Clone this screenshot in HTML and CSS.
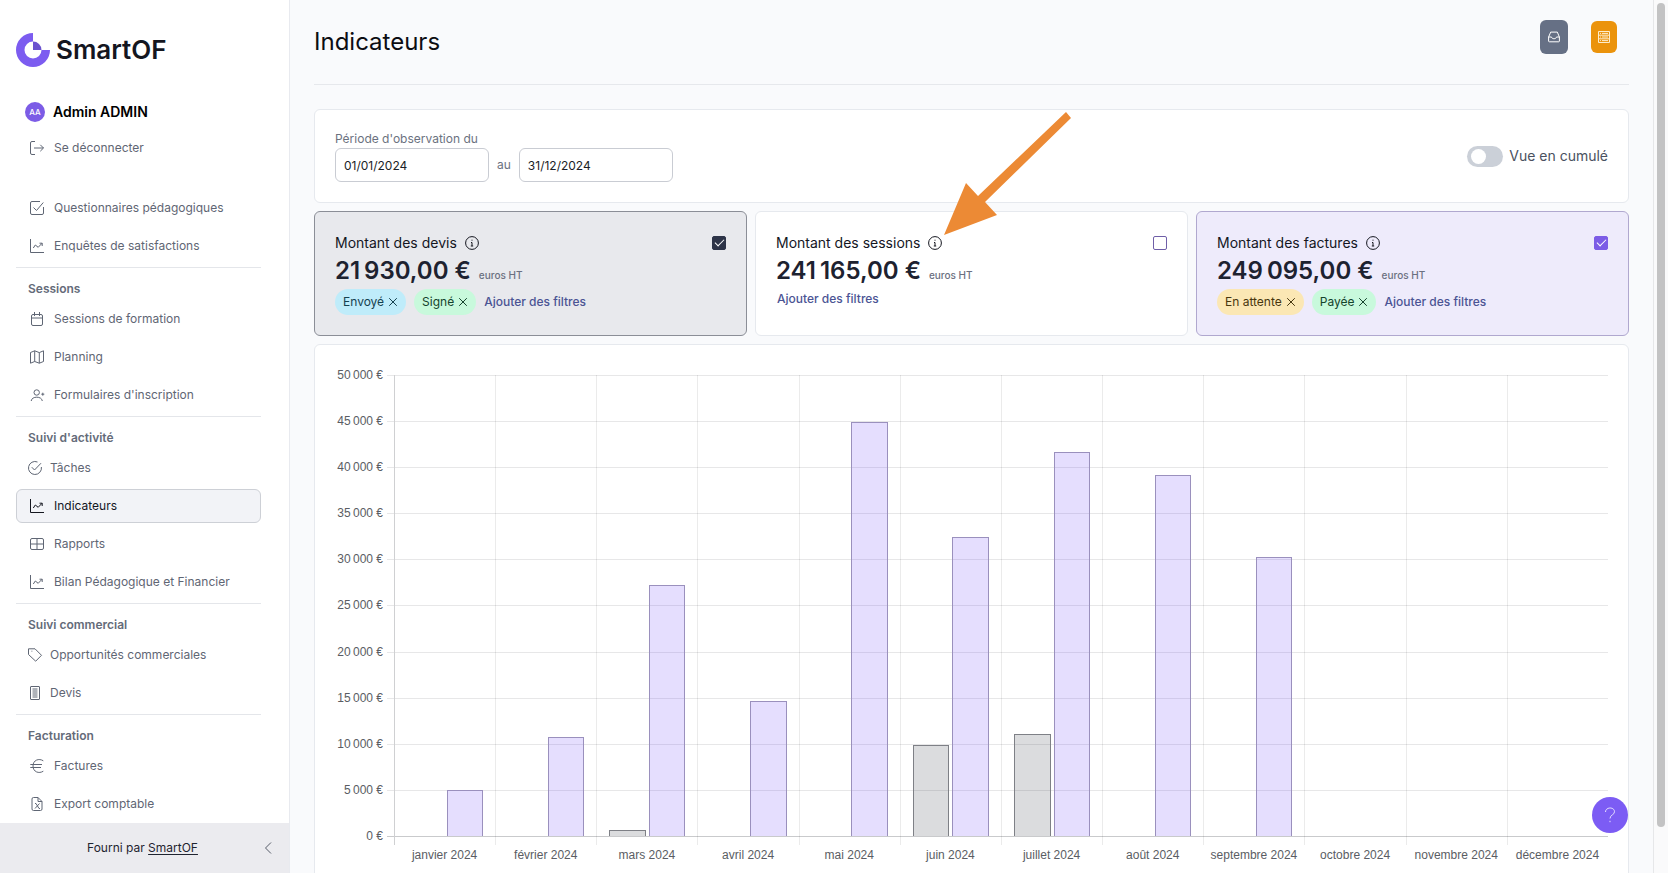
FILE: index.html
```html
<!DOCTYPE html>
<html lang="fr">
<head>
<meta charset="utf-8">
<meta name="viewport" content="width=device-width, initial-scale=1">
<title>Indicateurs – SmartOF</title>
<link rel="stylesheet" href="styles.css">
</head>
<body>
<svg class="sprite" aria-hidden="true">
  <symbol id="i-chart" viewBox="0 0 14 14"><path d="M.5 0v13.500H14M3.300 9l2-3 2.900 2.300L12 4.300M9.500 4.200H12.200V7"/></symbol>
  <symbol id="i-info" viewBox="0 0 14 14"><circle cx="7" cy="7" r="6.400"/><path d="M6 6.500h1V10M5.800 10h2.400M7 3.700v1"/></symbol>
  <symbol id="i-x" viewBox="0 0 10 10"><path d="M1.200 1.200l7.600 7.600M8.800 1.200L1.200 8.800"/></symbol>
</svg>
<div class="app">
  <aside class="sidebar">
    <a class="logo" href="#">
      <svg class="logo-mark" viewBox="0 0 34 34" aria-hidden="true"><path fill="#7c5cf0" d="M17 0A17 17 0 1 0 34 17H25.500A8.500 8.500 0 1 1 17 8.500Z"/><path fill="#6a52cf" d="M17 8.500A8.500 8.500 0 0 1 25.500 17H17Z"/></svg>
      <span>SmartOF</span>
    </a>
    <div class="user"><span class="avatar">AA</span><span>Admin ADMIN</span></div>
    <nav class="nav">
      <a class="item logout" href="#"><svg class="ico" viewBox="0 0 14 14"><path d="M5 .5H2A1.500 1.500 0 0 0 .5 2v10A1.500 1.500 0 0 0 2 13.500H5M4 7h9.500M10.300 3.800L13.500 7l-3.200 3.200"/></svg>Se déconnecter</a>
      <a class="item" href="#"><svg class="ico" viewBox="0 0 14 14"><path d="M10 .5H2A1.500 1.500 0 0 0 .5 2v10A1.500 1.500 0 0 0 2 13.500h10a1.500 1.500 0 0 0 1.500-1.500V6M3.500 6.500L6.500 9.500 13.300 1.500"/></svg>Questionnaires pédagogiques</a>
      <a class="item" href="#"><svg class="ico"><use href="#i-chart"/></svg>Enquêtes de satisfactions</a>

      <h2 class="group">Sessions</h2>
      <a class="item" href="#"><svg class="ico" viewBox="0 0 14 14"><path d="M3 2.500h8A1.500 1.500 0 0 1 12.500 4v8a1.500 1.500 0 0 1-1.500 1.500H3A1.500 1.500 0 0 1 1.500 12V4A1.500 1.500 0 0 1 3 2.500ZM1.500 6h11M4.500 0v4M9.500 0v4"/></svg>Sessions de formation</a>
      <a class="item" href="#"><svg class="ico" viewBox="0 0 14 14"><path d="M.5 2.500L4.700.8 9.300 2.600 13.500.8V11.500L9.300 13.200 4.700 11.500.5 13.200ZM4.700.8V11.500M9.300 2.600V13.200"/></svg>Planning</a>
      <a class="item" href="#"><svg class="ico" viewBox="0 0 14 14"><circle cx="6.700" cy="4.500" r="2.700"/><path d="M1.200 13C1.600 7.900 11.900 7.900 12.300 13M12.800 4.700v3M11.300 6.200h3"/></svg>Formulaires d'inscription</a>

      <h2 class="group">Suivi d'activité</h2>
      <a class="item tight" href="#"><svg class="ico" viewBox="0 0 14 14"><path d="M13.400 6A6.500 6.500 0 1 1 9.500 1M3.800 6.200L6.500 9 13 2.200"/></svg>Tâches</a>
      <a class="item active" href="#" aria-current="page"><svg class="ico"><use href="#i-chart"/></svg>Indicateurs</a>
      <a class="item" href="#"><svg class="ico" viewBox="0 0 14 14"><rect x=".5" y="1.500" width="13" height="11" rx="1.500"/><path d="M7 1.500v11M.5 7h13"/></svg>Rapports</a>
      <a class="item" href="#"><svg class="ico"><use href="#i-chart"/></svg>Bilan Pédagogique et Financier</a>

      <h2 class="group">Suivi commercial</h2>
      <a class="item tight" href="#"><svg class="ico" viewBox="0 0 14 14"><path d="M.5.8H7L13.500 7.300 7.700 13.200.5 6.500ZM3.500 3.200h.8"/></svg>Opportunités commerciales</a>
      <a class="item tight" href="#"><svg class="ico" viewBox="0 0 14 14"><rect x="2.500" y=".5" width="9" height="13" rx=".5"/><path d="M4.500 3h5M4.500 5h5M4.500 7h5M4.500 9h5M4.500 11h5"/></svg>Devis</a>

      <h2 class="group">Facturation</h2>
      <a class="item" href="#"><svg class="ico" viewBox="0 0 14 14"><path d="M13.300 1.800C9-1 3 1 3 7S9 15 13.300 12.200M.3 5.500H12M.3 8.500H11"/></svg>Factures</a>
      <a class="item" href="#"><svg class="ico" viewBox="0 0 14 14"><path d="M8 .5H3.500A1.500 1.500 0 0 0 2 2V12a1.500 1.500 0 0 0 1.500 1.500h7A1.500 1.500 0 0 0 12 12V4.500ZM8 .5v4h4M5 6.500h1L9 11.500H10M9.500 6.500L5 11.500"/></svg>Export comptable</a>
    </nav>
    <footer class="side-foot">
      <p>Fourni par <a href="#">SmartOF</a></p>
      <button class="collapse" type="button" aria-label="Replier le menu"><svg viewBox="0 0 8 14"><path d="M7 1.500L1.500 7 7 12.500"/></svg></button>
    </footer>
  </aside>

  <main class="main">
    <header class="head">
      <h1>Indicateurs</h1>
      <div class="head-actions">
        <button class="btn slate" type="button" aria-label="Boîte de réception"><svg viewBox="0 0 12 12"><path d="M.6 6L2.700 1.100H9.300L11.400 6V10a.8.8 0 0 1-.8.8H1.400A.8.8 0 0 1 .6 10ZM.6 6H3.500C3.800 8.300 8.200 8.300 8.500 6h2.900"/></svg></button>
        <button class="btn orange" type="button" aria-label="Liste"><svg viewBox="0 0 12 12"><path d="M.5.500h11v11H.5ZM.5 4.200h11M.5 7.800h11M2 2.400h1M2 6h1M2 9.600h1M4 2.400h6M4 6h6M4 9.600h6"/></svg></button>
      </div>
    </header>

    <section class="card period">
      <div>
        <label class="period-label" for="from">Période d'observation du</label>
        <div class="period-fields">
          <input class="date" id="from" type="text" value="01/01/2024">
          <label for="to">au</label>
          <input class="date" id="to" type="text" value="31/12/2024">
        </div>
      </div>
      <label class="switch"><input type="checkbox" role="switch">Vue en cumulé</label>
    </section>

    <section class="stats">
      <article class="card stat stat-devis">
        <div class="stat-top"><label for="c1">Montant des devis</label><svg class="info"><use href="#i-info"/></svg><input class="check" id="c1" type="checkbox" checked></div>
        <p class="value">21&#8239;930,00 €<small>euros HT</small></p>
        <div class="chips"><button class="chip sky" type="button">Envoyé<svg><use href="#i-x"/></svg></button><button class="chip green" type="button">Signé<svg><use href="#i-x"/></svg></button><a class="add" href="#">Ajouter des filtres</a></div>
      </article>
      <article class="card stat">
        <div class="stat-top"><label for="c2">Montant des sessions</label><svg class="info"><use href="#i-info"/></svg><input class="check" id="c2" type="checkbox"></div>
        <p class="value">241&#8239;165,00 €<small>euros HT</small></p>
        <a class="add alone" href="#">Ajouter des filtres</a>
        <svg class="arrow" viewBox="0 0 128 124" aria-hidden="true"><path d="M0 123L22 71 34 84 122 0 127 6 41 90 53 103Z"/></svg>
      </article>
      <article class="card stat stat-factures">
        <div class="stat-top"><label for="c3">Montant des factures</label><svg class="info"><use href="#i-info"/></svg><input class="check" id="c3" type="checkbox" checked></div>
        <p class="value">249&#8239;095,00 €<small>euros HT</small></p>
        <div class="chips"><button class="chip amber" type="button">En attente<svg><use href="#i-x"/></svg></button><button class="chip green" type="button">Payée<svg><use href="#i-x"/></svg></button><a class="add" href="#">Ajouter des filtres</a></div>
      </article>
    </section>

    <section class="card chart">
      <div class="rows">
        <div class="row"><span>50&#8239;000 €</span></div>
        <div class="row"><span>45&#8239;000 €</span></div>
        <div class="row"><span>40&#8239;000 €</span></div>
        <div class="row"><span>35&#8239;000 €</span></div>
        <div class="row"><span>30&#8239;000 €</span></div>
        <div class="row"><span>25&#8239;000 €</span></div>
        <div class="row"><span>20&#8239;000 €</span></div>
        <div class="row"><span>15&#8239;000 €</span></div>
        <div class="row"><span>10&#8239;000 €</span></div>
        <div class="row"><span>5&#8239;000 €</span></div>
        <div class="row zero"><span>0 €</span></div>
      </div>
      <div class="months">
        <div class="month"><i class="bar f" style="height:10%"></i></div>
        <div class="month"><i class="bar f" style="height:21.5%"></i></div>
        <div class="month"><i class="bar d" style="height:1.2%"></i><i class="bar f" style="height:54.5%"></i></div>
        <div class="month"><i class="bar f" style="height:29.2%"></i></div>
        <div class="month"><i class="bar f" style="height:89.8%"></i></div>
        <div class="month"><i class="bar d" style="height:19.8%"></i><i class="bar f" style="height:64.9%"></i></div>
        <div class="month"><i class="bar d" style="height:22.2%"></i><i class="bar f" style="height:83.3%"></i></div>
        <div class="month"><i class="bar f" style="height:78.3%"></i></div>
        <div class="month"><i class="bar f" style="height:60.5%"></i></div>
        <div class="month"></div>
        <div class="month"></div>
        <div class="month"></div>
      </div>
      <div class="names">
        <span>janvier 2024</span><span>février 2024</span><span>mars 2024</span><span>avril 2024</span><span>mai 2024</span><span>juin 2024</span><span>juillet 2024</span><span>août 2024</span><span>septembre 2024</span><span>octobre 2024</span><span>novembre 2024</span><span>décembre 2024</span>
      </div>
    </section>
  </main>
  <div class="scroll" aria-hidden="true"><div class="thumb"></div></div>
  <button class="help" type="button" aria-label="Aide"><svg viewBox="0 0 12 16"><path d="M1.500 5C1.500-.3 10.500-.3 10.500 4.700 10.500 8 6 7.800 6 11.500M6 13.800v1.400"/></svg></button>
</div>
</body>
</html>
```
FILE: styles.css
```css
*, *::before, *::after { box-sizing: border-box; }
body {
  margin: 0;
  font: 12px/20px Inter, "Noto Sans", sans-serif;
  color: #1f2430;
  background: #f9fafc;
}
h1, h2, p { margin: 0; }
a { color: inherit; text-decoration: none; }
button, input { font: inherit; margin: 0; }
svg { fill: none; stroke: currentColor; flex: none; }
.sprite { display: none; }
.app { position: relative; display: flex; height: 100vh; overflow: hidden; }

/* Sidebar */
.sidebar {
  flex: 0 0 290px;
  display: flex;
  flex-direction: column;
  background: #fff;
  border-right: 1px solid #e8eaef;
}
.logo {
  display: flex;
  align-items: center;
  gap: 6px;
  margin: 33px 0 0 16px;
  font-size: 26px;
  line-height: 34px;
  font-weight: 600;
  color: #14161f;
}
.logo-mark { width: 34px; height: 34px; stroke: none; }
.user {
  display: flex;
  align-items: center;
  gap: 8px;
  margin: 35px 0 0 25px;
  font-size: 14px;
  font-weight: 600;
  color: #000;
}
.avatar {
  width: 20px;
  height: 20px;
  border-radius: 50%;
  background: #7c5ce6;
  color: #fff;
  font-size: 8px;
  font-weight: 500;
  text-align: center;
}
.nav { margin: 7px 28px 0 16px; }
.item {
  display: flex;
  align-items: center;
  gap: 10px;
  height: 34px;
  margin: 2px 0;
  padding: 0 13px;
  border: 1px solid transparent;
  border-radius: 6px;
  color: #5f6674;
}
.item + .item { margin-top: 4px; }
.item.tight { padding-left: 11px; gap: 8px; }
.item.logout + .item { margin-top: 26px; }
.item.active { background: #f2f3f7; border-color: #cdd0d6; color: #14161f; }
.ico { width: 14px; height: 14px; overflow: visible; }
.group {
  padding: 11px 12px 1px;
  border-top: 1px solid #e4e6ea;
  font-size: 12px;
  line-height: 20px;
  font-weight: 600;
  color: #646b79;
  margin-top: 4px;
}
.side-foot {
  position: relative;
  flex: 1;
  display: flex;
  align-items: center;
  justify-content: center;
  background: #ebebef;
  padding-right: 4px;
}
.side-foot a { text-decoration: underline; text-underline-offset: 2px; }
.collapse {
  position: absolute;
  right: 17px;
  padding: 0;
  border: 0;
  background: none;
  color: #555b68;
  line-height: 0;
}
.collapse svg { width: 8px; height: 14px; }

/* Page */
.main { flex: 1; min-width: 0; padding: 0 24px; overflow: hidden; }
.head {
  display: flex;
  align-items: flex-start;
  justify-content: space-between;
  height: 85px;
  padding: 20px 12px 0 0;
  border-bottom: 1px solid #e6e8ec;
}
.head h1 { font-size: 24px; line-height: 44px; font-weight: 400; color: #0c0d12; }
.head-actions { display: flex; align-items: center; gap: 23px; }
.btn {
  display: grid;
  place-items: center;
  padding: 0;
  border: 0;
  border-radius: 6px;
  color: #fff;
}
.btn svg { width: 12px; height: 12px; }
.btn.slate { width: 28px; height: 34px; background: #667085; }
.btn.orange { width: 26px; height: 32px; background: #eb930c; color: #fdeccb; }

.card { background: #fff; border: 1px solid #e6e9ee; border-radius: 6px; }
.period {
  display: flex;
  align-items: center;
  justify-content: space-between;
  margin-top: 24px;
  padding: 20px;
}
.period-label { display: block; line-height: 18px; }
.period label { color: #6b7280; }
.period-fields { display: flex; align-items: center; gap: 8px; }
.date {
  width: 154px;
  height: 34px;
  padding: 0 8px;
  border: 1px solid #c9ccd3;
  border-radius: 6px;
  background: #fff;
  color: #1b1e27;
}
.period .switch { display: flex; align-items: center; gap: 6px; font-size: 14px; color: #4a5160; }
.switch input {
  appearance: none;
  width: 36px;
  height: 21px;
  padding: 3px 4px;
  border-radius: 11px;
  background: #cbd0d8;
}
.switch input::before { content: ""; display: block; width: 15px; height: 15px; border-radius: 50%; background: #fff; }

.stats { display: grid; grid-template-columns: repeat(3, 1fr); gap: 8px; margin-top: 8px; }
.stat { position: relative; padding: 21px 20px 20px; }
.stat-devis { background: #e8e9ed; border-color: #8b8e97; }
.stat-factures { background: #eeebfb; border-color: #b0a8cf; }
.stat-top { display: flex; align-items: center; font-size: 14px; color: #14161f; }
.info { width: 14px; height: 14px; margin-left: 8px; color: #14161f; }
.check {
  appearance: none;
  display: grid;
  place-items: center;
  width: 14px;
  height: 14px;
  margin-left: auto;
  border: 1px solid #6f5fa8;
  border-radius: 2px;
  background: #fff;
}
.check:checked::before {
  content: "";
  width: 9px;
  height: 5px;
  margin-bottom: 3px;
  border: solid #fff;
  border-width: 0 0 1px 1px;
  transform: rotate(-45deg);
}
.stat-devis .check { background: #2d3448; border-color: #2d3448; }
.stat-factures .check { background: #7c5ce6; border-color: #7c5ce6; }
.value { font-size: 24px; line-height: 36px; font-weight: 600; color: #1d2230; }
.value small { margin-left: 8px; font-size: 10px; line-height: 12px; font-weight: 500; color: #6b7080; }
.chips { display: flex; align-items: center; gap: 8px; }
.chip {
  display: flex;
  align-items: center;
  gap: 4px;
  height: 26px;
  padding: 0 8px;
  border: 0;
  border-radius: 13px;
}
.chip svg { width: 10px; height: 10px; }
.sky { background: #bfecfa; color: #15414f; }
.green { background: #c8f9dc; color: #14432c; }
.amber { background: #fbe7b4; color: #47360e; }
.add { font-weight: 500; color: #4b5494; }
.add.alone { display: inline-block; margin-left: 1px; }
.arrow { position: absolute; left: 188px; top: -100px; width: 128px; height: 124px; fill: #ec8a35; stroke: none; z-index: 1; }

/* Chart: horizontal lines and month columns share one grid cell */
.chart {
  display: grid;
  grid-template: 470px 22px / 59px 1fr;
  margin-top: 8px;
  padding: 30px 20px 24px;
  font-family: "Liberation Sans", Arial, sans-serif;
  color: #5a5d63;
}
.rows { grid-area: 1 / 1 / 2 / 3; display: flex; flex-direction: column; padding-bottom: 8px; }
.row { flex: 1 0 0; display: flex; }
.row.zero { flex: 0 0 1px; }
.row span { flex: 0 0 52px; height: 16px; margin: -8px 0; padding-right: 4px; line-height: 16px; text-align: right; white-space: nowrap; }
.row::after { content: ""; flex: 1; border-top: 1px solid #e7e7e8; }
.row.zero::after { border-color: #c9cacc; }
.months, .names { grid-column: 2; display: grid; grid-template-columns: repeat(12, 1fr); }
.months { grid-row: 1; }
.month {
  display: flex;
  align-items: flex-end;
  gap: 4%;
  padding: 0 12px 9px;
  border-left: 1px solid rgba(0, 0, 0, .08);
}
.month:first-child { border-left-color: #cfd0d2; }
.bar { flex: 0 0 48%; border: 1px solid; border-bottom: 0; }
.bar.f { margin-left: auto; background: rgba(124, 92, 248, .2); border-color: #9a90bd; }
.bar.d { background: rgba(55, 62, 72, .18); border-color: #7e8086; }
.names span { text-align: center; white-space: nowrap; line-height: 20px; }

.scroll { flex: 0 0 15px; padding: 3px; border-left: 1px solid #e6e7e9; background: #fafafb; }
.thumb { width: 8px; height: 95%; border-radius: 4px; background: #c3c3c4; }
.help {
  position: absolute;
  right: 40px;
  bottom: 40px;
  display: grid;
  place-items: center;
  width: 36px;
  height: 36px;
  padding: 0;
  border: 0;
  border-radius: 50%;
  background: #7c5cf4;
  color: #e6dfff;
}
.help svg { width: 12px; height: 16px; }
```
